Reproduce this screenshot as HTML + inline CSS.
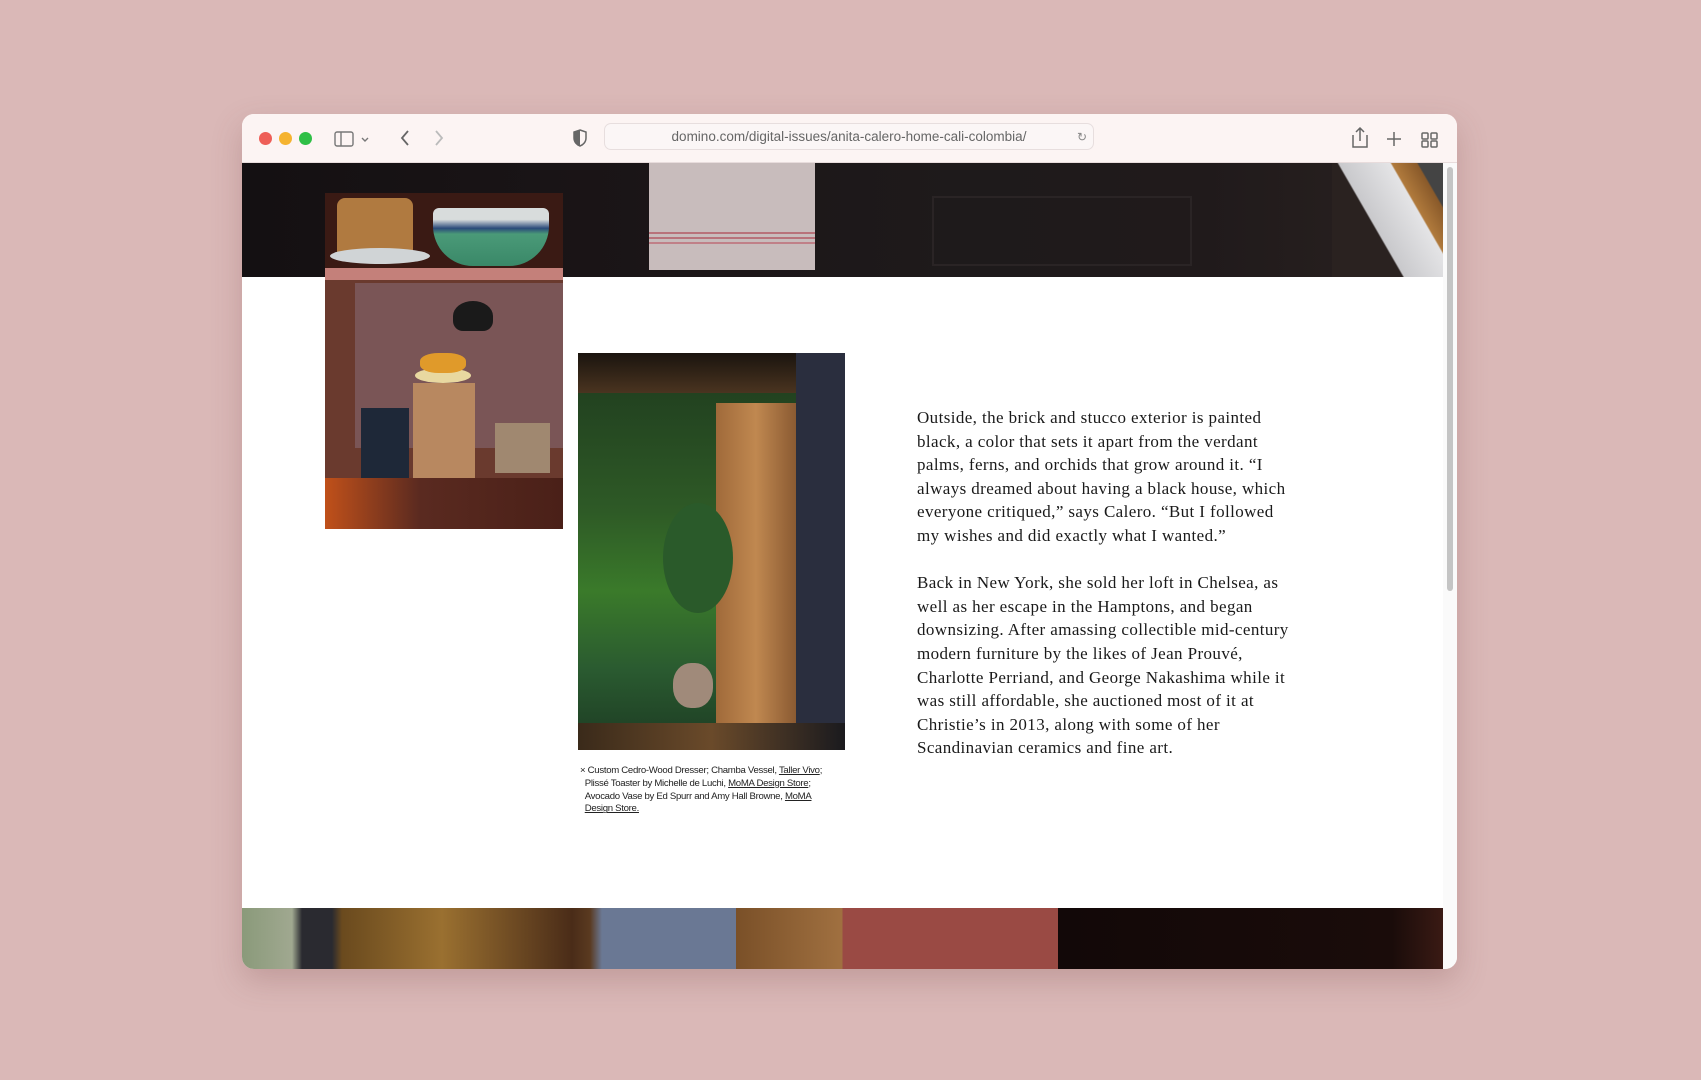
<!DOCTYPE html>
<html><head><meta charset="utf-8"><style>
*{margin:0;padding:0;box-sizing:border-box}
body{width:1701px;height:1080px;background:#dab8b7;position:relative;overflow:hidden;font-family:"Liberation Sans",sans-serif}
.win{position:absolute;left:242px;top:114px;width:1215px;height:855px;background:#fff;border-radius:12px;overflow:hidden;box-shadow:0 12px 30px rgba(120,70,70,.25)}
.bar{position:absolute;left:0;top:0;width:100%;height:49px;background:#fcf4f3;border-bottom:1px solid #e8dcdc}
.dot{position:absolute;top:18px;width:13px;height:13px;border-radius:50%}
.url{position:absolute;left:362px;top:9px;width:490px;height:27px;border:1px solid #e7dede;border-radius:7px;background:#fbf6f6;font-size:13.5px;color:#666;text-align:center;line-height:26px}
.abs{position:absolute}
.txt{position:absolute;left:675px;top:292px;width:382px;font-family:"Liberation Serif",serif;font-size:17px;letter-spacing:.4px;line-height:23.6px;color:#1a1a1a}
.txt p{margin-bottom:23.6px}
.cap{position:absolute;left:338px;top:651px;width:260px;font-size:9.6px;line-height:12.8px;color:#222;letter-spacing:-.3px}
.cap u{text-decoration:underline}
</style></head><body>
<div class="win">
 <div class="bar">
  <div class="dot" style="left:17px;background:#ee5e57"></div>
  <div class="dot" style="left:37px;background:#f5b32f"></div>
  <div class="dot" style="left:57px;background:#2fbf46"></div>
  <svg class="abs" style="left:92px;top:16px" width="48" height="18" viewBox="0 0 48 18" fill="none" stroke="#777" stroke-width="1.4"><rect x="1" y="2" width="18" height="14" rx="2"/><line x1="7" y1="2" x2="7" y2="16"/><path d="M28 8l3 3 3-3"/></svg>
  <svg class="abs" style="left:156px;top:14px" width="50" height="20" fill="none" stroke="#666" stroke-width="1.8"><path d="M10 3l-6 7 6 7"/><path d="M38 3l6 7-6 7" stroke="#bbb"/></svg>
  <svg class="abs" style="left:330px;top:15px" width="16" height="18" viewBox="0 0 16 18"><path d="M8 1l6 2v6c0 4-3 7-6 8-3-1-6-4-6-8V3z" fill="none" stroke="#666" stroke-width="1.5"/><path d="M8 1v16c-3-1-6-4-6-8V3z" fill="#666"/></svg>
  <div class="url">domino.com/digital-issues/anita-calero-home-cali-colombia/<span style="position:absolute;right:6px;top:0;font-size:12px;color:#888">↻</span></div>
  <svg class="abs" style="left:1108px;top:12px" width="100" height="24" fill="none" stroke="#666" stroke-width="1.5"><path d="M2 9h-0v12h14V9M9 2v13M5 6l4-4 4 4" transform="translate(1,0)"/><path d="M44 6v14M37 13h14"/><rect x="72" y="7" width="6" height="6" rx="1"/><rect x="81" y="7" width="6" height="6" rx="1"/><rect x="72" y="15" width="6" height="6" rx="1"/><rect x="81" y="15" width="6" height="6" rx="1"/></svg>
 </div>
 <div class="abs" style="left:0;top:49px;width:1201px;height:114px;background:linear-gradient(90deg,#141012,#1c1618 40%,#1e1a1b 60%,#201a1b 80%,#2a2220)"></div>
 <div class="abs" style="left:690px;top:82px;width:260px;height:70px;border:2px solid #2a2425"></div>
 <div class="abs" style="left:407px;top:49px;width:166px;height:107px;background:#c8bcbc"></div>
 <div class="abs" style="left:407px;top:118px;width:166px;height:2px;background:#b8727a;box-shadow:0 5px 0 #b8727a,0 10px 0 #c08088"></div>
 <div class="abs" style="left:1090px;top:49px;width:111px;height:114px;background:linear-gradient(60deg,#2a2220 40%,#c9c9cc 41%,#e4e4e6 70%,#b07a3c 71%,#8a5a2a 85%,#444 86%)"></div>
 <div class="abs" style="left:83px;top:79px;width:238px;height:336px;background:#6a3a2e;overflow:hidden">
  <div class="abs" style="left:0;top:0;width:238px;height:75px;background:#3a1a14"></div>
  <div class="abs" style="left:12px;top:5px;width:76px;height:55px;background:#b07a40;border-radius:8px 8px 0 0"></div>
  <div class="abs" style="left:5px;top:55px;width:100px;height:16px;background:#d0d4d6;border-radius:50%"></div>
  <div class="abs" style="left:108px;top:15px;width:116px;height:58px;background:linear-gradient(#d8dcdc 20%,#2a4a7a 35%,#4a9a78 45%,#3a8868);border-radius:6px 6px 40px 40px"></div>
  <div class="abs" style="left:0;top:75px;width:238px;height:12px;background:#c4807a"></div>
  <div class="abs" style="left:30px;top:90px;width:208px;height:165px;background:#7a5556"></div>
  <div class="abs" style="left:128px;top:108px;width:40px;height:30px;background:#1a1a1a;border-radius:50% 50% 10px 10px"></div>
  <div class="abs" style="left:88px;top:190px;width:62px;height:95px;background:#b88860"></div>
  <div class="abs" style="left:90px;top:175px;width:56px;height:15px;background:#e8d8a0;border-radius:50%"></div>
  <div class="abs" style="left:95px;top:160px;width:46px;height:20px;background:#e09a2a;border-radius:40%"></div>
  <div class="abs" style="left:36px;top:215px;width:48px;height:70px;background:#1e2838"></div>
  <div class="abs" style="left:170px;top:230px;width:55px;height:50px;background:#a08870"></div>
  <div class="abs" style="left:0;top:285px;width:238px;height:51px;background:linear-gradient(90deg,#c0501a,#5a2a20 40%,#4a2018)"></div>
 </div>
 <div class="abs" style="left:336px;top:239px;width:267px;height:397px;background:linear-gradient(180deg,#1e3a1e,#2e5a26 40%,#3a7a2a 60%,#2a5a30 80%,#1c3a22);overflow:hidden">
  <div class="abs" style="left:0;top:0;width:267px;height:40px;background:linear-gradient(#1a140e,#4a3420)"></div>
  <div class="abs" style="left:138px;top:50px;width:80px;height:330px;background:linear-gradient(90deg,#a06a3a,#c08850,#8a5a32)"></div>
  <div class="abs" style="left:218px;top:0;width:49px;height:397px;background:#2a2e3e"></div>
  <div class="abs" style="left:85px;top:150px;width:70px;height:110px;background:#2a5a2a;border-radius:50%"></div>
  <div class="abs" style="left:95px;top:310px;width:40px;height:45px;background:#a08a7a;border-radius:45%"></div>
  <div class="abs" style="left:0;top:370px;width:267px;height:27px;background:linear-gradient(90deg,#3a2a1a,#6a4a2a 50%,#1a1a1e)"></div>
 </div>
 <div class="cap">× Custom Cedro-Wood Dresser; Chamba Vessel, <u>Taller Vivo</u>;<br>&nbsp;&nbsp;Plissé Toaster by Michelle de Luchi, <u>MoMA Design Store</u>;<br>&nbsp;&nbsp;Avocado Vase by Ed Spurr and Amy Hall Browne, <u>MoMA</u><br>&nbsp;&nbsp;<u>Design Store.</u></div>
 <div class="txt">
  <p>Outside, the brick and stucco exterior is painted black, a color that sets it apart from the verdant palms, ferns, and orchids that grow around it. “I always dreamed about having a black house, which everyone critiqued,” says Calero. “But I followed my wishes and did exactly what I wanted.”</p>
  <p>Back in New York, she sold her loft in Chelsea, as well as her escape in the Hamptons, and began downsizing. After amassing collectible mid-century modern furniture by the likes of Jean Prouvé, Charlotte Perriand, and George Nakashima while it was still affordable, she auctioned most of it at Christie’s in 2013, along with some of her Scandinavian ceramics and fine art.</p>
 </div>
 <div class="abs" style="left:0;top:794px;width:1201px;height:61px;background:linear-gradient(90deg,#8a9a7a 0,#a0a890 50px,#2a2a30 60px,#2a2a30 90px,#6a4a1e 100px,#9a7030 200px,#4a2c18 330px,#5a3a20 348px,#6a7894 360px,#6a7894 494px,#7a5028 494px,#a07040 600px,#9a4a44 601px,#9a4a44 816px,#120808 816px,#1a0c0a 1150px,#3a1a14 1201px)"></div>
 <div class="abs" style="left:1201px;top:49px;width:14px;height:806px;background:#fafafa"></div>
 <div class="abs" style="left:1205px;top:53px;width:6px;height:424px;background:#c4c4c4;border-radius:3px"></div>
</div>
</body></html>
